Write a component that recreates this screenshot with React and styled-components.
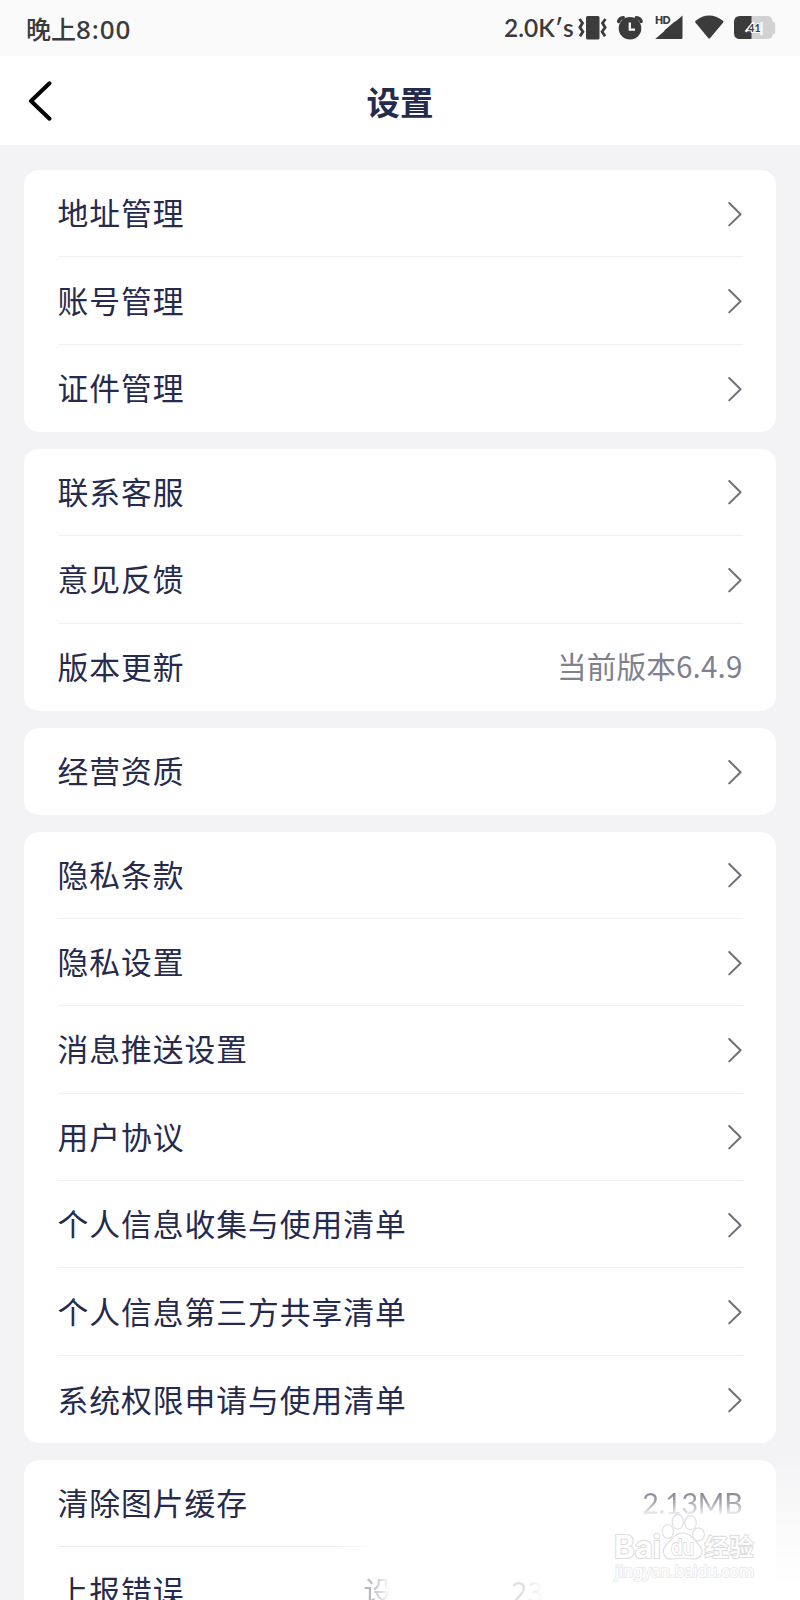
import React from "react";
import styled, { createGlobalStyle } from "styled-components";

const colors = {
  page: "#f3f3f5",
  ink: "#262a4c",
  muted: "#80818f",
  line: "#f0f0f1",
  status: "#3b3b3b",
};

const GlobalStyle = createGlobalStyle`
  * {
    box-sizing: border-box;
  }
  body {
    margin: 0;
    background: ${colors.page};
    font-family: "Noto Sans CJK SC", sans-serif;
  }
`;

const Screen = styled.main`
  position: relative;
  display: flex;
  flex-direction: column;
  width: 800px;
  height: 1600px;
  overflow: hidden;
  background: ${colors.page};
`;

/// STATUS BAR
const StatusBar = styled.div`
  display: flex;
  flex: none;
  align-items: center;
  justify-content: space-between;
  height: 56px;
  padding: 0 24px 0 26px;
  background: #fafafa;
  color: ${colors.status};
`;

const Clock = styled.span`
  font-size: 25px;
  font-weight: 500;
  line-height: 56px;
`;

const ClockDigits = styled.span`
  font-family: "Noto Sans", sans-serif;
  font-size: 26px;
  font-weight: 500;
  letter-spacing: 0.9px;
`;

const StatusRight = styled.div`
  display: flex;
  align-items: center;
`;

const Speed = styled.span`
  font-family: Lato, sans-serif;
  font-size: 24.5px;
  font-weight: 600;
  line-height: 56px;
  width: 74px;
  white-space: nowrap;
`;

/// HEADER
const Header = styled.header`
  display: grid;
  flex: none;
  grid-template-columns: 80px 1fr 80px;
  align-items: center;
  height: 89px;
  background: #fff;
`;

const BackButton = styled.button`
  display: flex;
  padding: 0 0 0 28px;
  border: 0;
  background: none;
`;

const Title = styled.h1`
  margin: 1px 0 0;
  color: ${colors.ink};
  font-size: 33.5px;
  font-weight: 700;
  line-height: 48px;
  text-align: center;
`;

/// CARDS
const CardList = styled.div`
  display: flex;
  flex-direction: column;
  gap: 16.6px;
  padding: 25px 24.5px 0 24px;
`;

const Card = styled.section`
  padding: 0 33px 0 33.5px;
  border-radius: 15px;
  background: #fff;
`;

const Row = styled.div`
  display: flex;
  align-items: center;
  justify-content: space-between;
  height: 87.4px;
  border-bottom: 1px solid ${colors.line};
  border-image: ${(p) =>
    p.$fadeLine
      ? "linear-gradient(90deg, #ececee 40%, transparent 46%) 1"
      : "none"};
  &:last-child {
    border-bottom: 0;
  }
`;

const Label = styled.span`
  margin-top: -2px;
  color: ${colors.ink};
  font-size: 30.8px;
  line-height: 44px;
  letter-spacing: 0.95px;
  white-space: nowrap;
`;

const Value = styled.span`
  margin-top: -3px;
  color: ${colors.muted};
  font-size: 29.6px;
  line-height: 44px;
  letter-spacing: 0.15px;
`;

const CacheSize = styled(Value)`
  margin-top: 0;
  line-height: 34px;
  background: linear-gradient(#8a8a98 20%, #a9a9b4 50%, #ececf0 82%);
  background-clip: text;
  color: transparent;
  font-family: Lato, sans-serif;
  font-size: 28.6px;
  letter-spacing: -0.2px;
`;

const DeviceInfo = styled.div`
  display: flex;
  justify-content: space-between;
  width: 184px;
  margin-right: 195px;
  margin-top: -2px;
  color: #a5a5af;
  font-size: 29px;
  line-height: 44px;
`;

const FadedText = styled.span`
  width: ${(p) => p.$width}px;
  white-space: nowrap;
  opacity: ${(p) => p.$opacity};
  mask-image: linear-gradient(90deg, #000 25%, transparent 90%);
`;

/// WATERMARK
const CornerFade = styled.div`
  position: absolute;
  right: 0;
  bottom: 0;
  width: 25px;
  height: 150px;
  background: linear-gradient(transparent, #fff 90%);
`;

const Watermark = styled.div`
  position: absolute;
  top: 1512px;
  left: 612px;
  width: 146px;
  height: 72px;
`;

const Icon = styled.svg`
  display: block;
  flex: none;
`;

const Chevron = () => (
  <Icon width="16" height="27" viewBox="0 -1 16 27" fill="none">
    <path
      d="M2.2 2 13.6 13.2 2.2 24.4"
      stroke="#707078"
      strokeWidth="2"
      strokeLinecap="round"
      strokeLinejoin="round"
    />
  </Icon>
);

// vibrate, alarm, signal, wifi, battery
const StatusIcons = () => (
  <Icon width="198" height="56" viewBox="578 0 198 56" fill={colors.status}>
    <rect x="586" y="16" width="13.5" height="23.5" rx="1.5" />
    <g fill="none" stroke={colors.status} strokeWidth="2.8">
      <path d="M579.5 19l3 4-2.6 4.5 3 4.3-3 4.5" />
      <path d="M605.5 19l-3 4 2.6 4.5-3 4.3 3 4.5" />
    </g>
    <circle cx="630" cy="28.3" r="11.3" />
    <path
      d="M618.6 21.5Q619.4 18.3 623.2 17.8M641.2 21.5Q640.2 18.3 636.4 17.8"
      fill="none"
      stroke={colors.status}
      strokeWidth="3.4"
      strokeLinecap="round"
    />
    <path d="M629.8 22.5v7.2h5.2" fill="none" stroke="#fafafa" strokeWidth="2.3" />
    <path d="M655.5 38.7 682.5 15.6v22.5q0 .8-.8.8h-26.4z" />
    <rect x="654" y="13" width="16" height="12" fill="#fafafa" />
    <path d="M664 30.8 676 20.5 670 31z" />
    <text
      x="655"
      y="23.6"
      fontFamily="Lato, sans-serif"
      fontSize="10.5"
      fontWeight="800"
      letterSpacing="-.6"
    >
      HD
    </text>
    <path d="M695.6 20.8Q709 10.2 723 20.8q.8.8.2 1.6L710.2 38q-1 1-2 0l-12.8-15.6q-.6-.8.2-1.6z" />
    <path d="M741 16h26q5.5 0 5.5 5.5 2.7 0 2.7 3v7q0 3-2.7 3 0 4.6-5.5 4.6h-26z" fill="#d2d2d2" />
    <path d="M751.5 16H740q-6 0-6 6v11q0 6 6 6h11.5z" />
    <path d="M745.6 31.8 754 22M761.5 22v13" fill="none" stroke="#fafafa" strokeWidth="2.4" />
    <text
      x="748.3"
      y="31.6"
      fontFamily="Lato, sans-serif"
      fontSize="10.5"
      fontWeight="700"
      stroke="#fafafa"
      strokeWidth="2"
      paintOrder="stroke"
    >
      41
    </text>
  </Icon>
);

const BaiduMark = () => (
  <Watermark>
    <Icon width="146" height="72" viewBox="612 1512 146 72">
      <g fill="#fff" stroke="#dedede" strokeWidth="1.1">
        <g
          fontFamily="Inter, sans-serif"
          fontWeight="600"
          paintOrder="stroke"
          strokeWidth="2.2"
        >
          <text x="614" y="1557.5" fontSize="31" textLength="47" lengthAdjust="spacingAndGlyphs">
            Bai
          </text>
          <text
            x="704.5"
            y="1556"
            fontFamily="Noto Sans CJK SC, sans-serif"
            fontSize="24"
            fontWeight="500"
            textLength="49"
          >
            经验
          </text>
        </g>
        <path d="M683 1533c8 0 11 7 15 11 8 7 3 16-6 15-6-1-13-1-19 0-9 1-13-8-6-15 5-5 8-11 16-11z" />
        <ellipse cx="667.8" cy="1531.5" rx="5.6" ry="7" />
        <ellipse cx="677.8" cy="1521.8" rx="5.6" ry="7.4" />
        <ellipse cx="690.5" cy="1522.8" rx="5.8" ry="7" />
        <ellipse cx="698.5" cy="1534.5" rx="5.8" ry="6.6" />
        <text
          x="671"
          y="1555"
          fontFamily="Inter, sans-serif"
          fontSize="21"
          fontWeight="500"
          strokeWidth="1.8"
          paintOrder="stroke"
          textLength="23"
          lengthAdjust="spacingAndGlyphs"
        >
          du
        </text>
      </g>
      <text
        x="615"
        y="1577"
        fill="#fff"
        stroke="#eaeaea"
        strokeWidth="1.8"
        paintOrder="stroke"
        fontFamily="Noto Sans, sans-serif"
        fontSize="16.5"
        textLength="139"
        lengthAdjust="spacingAndGlyphs"
      >
        jingyan.baidu.com
      </text>
    </Icon>
  </Watermark>
);

const groups = [
  [{ label: "地址管理" }, { label: "账号管理" }, { label: "证件管理" }],
  [
    { label: "联系客服" },
    { label: "意见反馈" },
    { label: "版本更新", end: <Value>当前版本6.4.9</Value> },
  ],
  [{ label: "经营资质" }],
  [
    { label: "隐私条款" },
    { label: "隐私设置" },
    { label: "消息推送设置" },
    { label: "用户协议" },
    { label: "个人信息收集与使用清单" },
    { label: "个人信息第三方共享清单" },
    { label: "系统权限申请与使用清单" },
  ],
  [
    { label: "清除图片缓存", end: <CacheSize>2.13MB</CacheSize>, fade: true },
    {
      label: "上报错误",
      end: (
        <DeviceInfo>
          <FadedText $width={29} $opacity={0.8}>
            设
          </FadedText>
          <FadedText $width={36} $opacity={0.35}>
            23
          </FadedText>
        </DeviceInfo>
      ),
    },
  ],
];

export default function App() {
  return (
    <>
      <GlobalStyle />
      <Screen>
        <StatusBar>
          <Clock>
            晚上<ClockDigits>8:00</ClockDigits>
          </Clock>
          <StatusRight>
            <Speed>2.0K′s</Speed>
            <StatusIcons />
          </StatusRight>
        </StatusBar>
        <Header>
          <BackButton aria-label="返回">
            <Icon width="24" height="42" viewBox="0 0 24 42" fill="none">
              <path
                d="M21.5 3.3 3 21l18.5 17.7"
                stroke="#000"
                strokeWidth="4"
                strokeLinecap="round"
                strokeLinejoin="round"
              />
            </Icon>
          </BackButton>
          <Title>设置</Title>
        </Header>
        <CardList>
          {groups.map((rows) => (
            <Card key={rows[0].label}>
              {rows.map((row) => (
                <Row key={row.label} $fadeLine={row.fade}>
                  <Label>{row.label}</Label>
                  {row.end || <Chevron />}
                </Row>
              ))}
            </Card>
          ))}
        </CardList>
        <CornerFade />
        <BaiduMark />
      </Screen>
    </>
  );
}
